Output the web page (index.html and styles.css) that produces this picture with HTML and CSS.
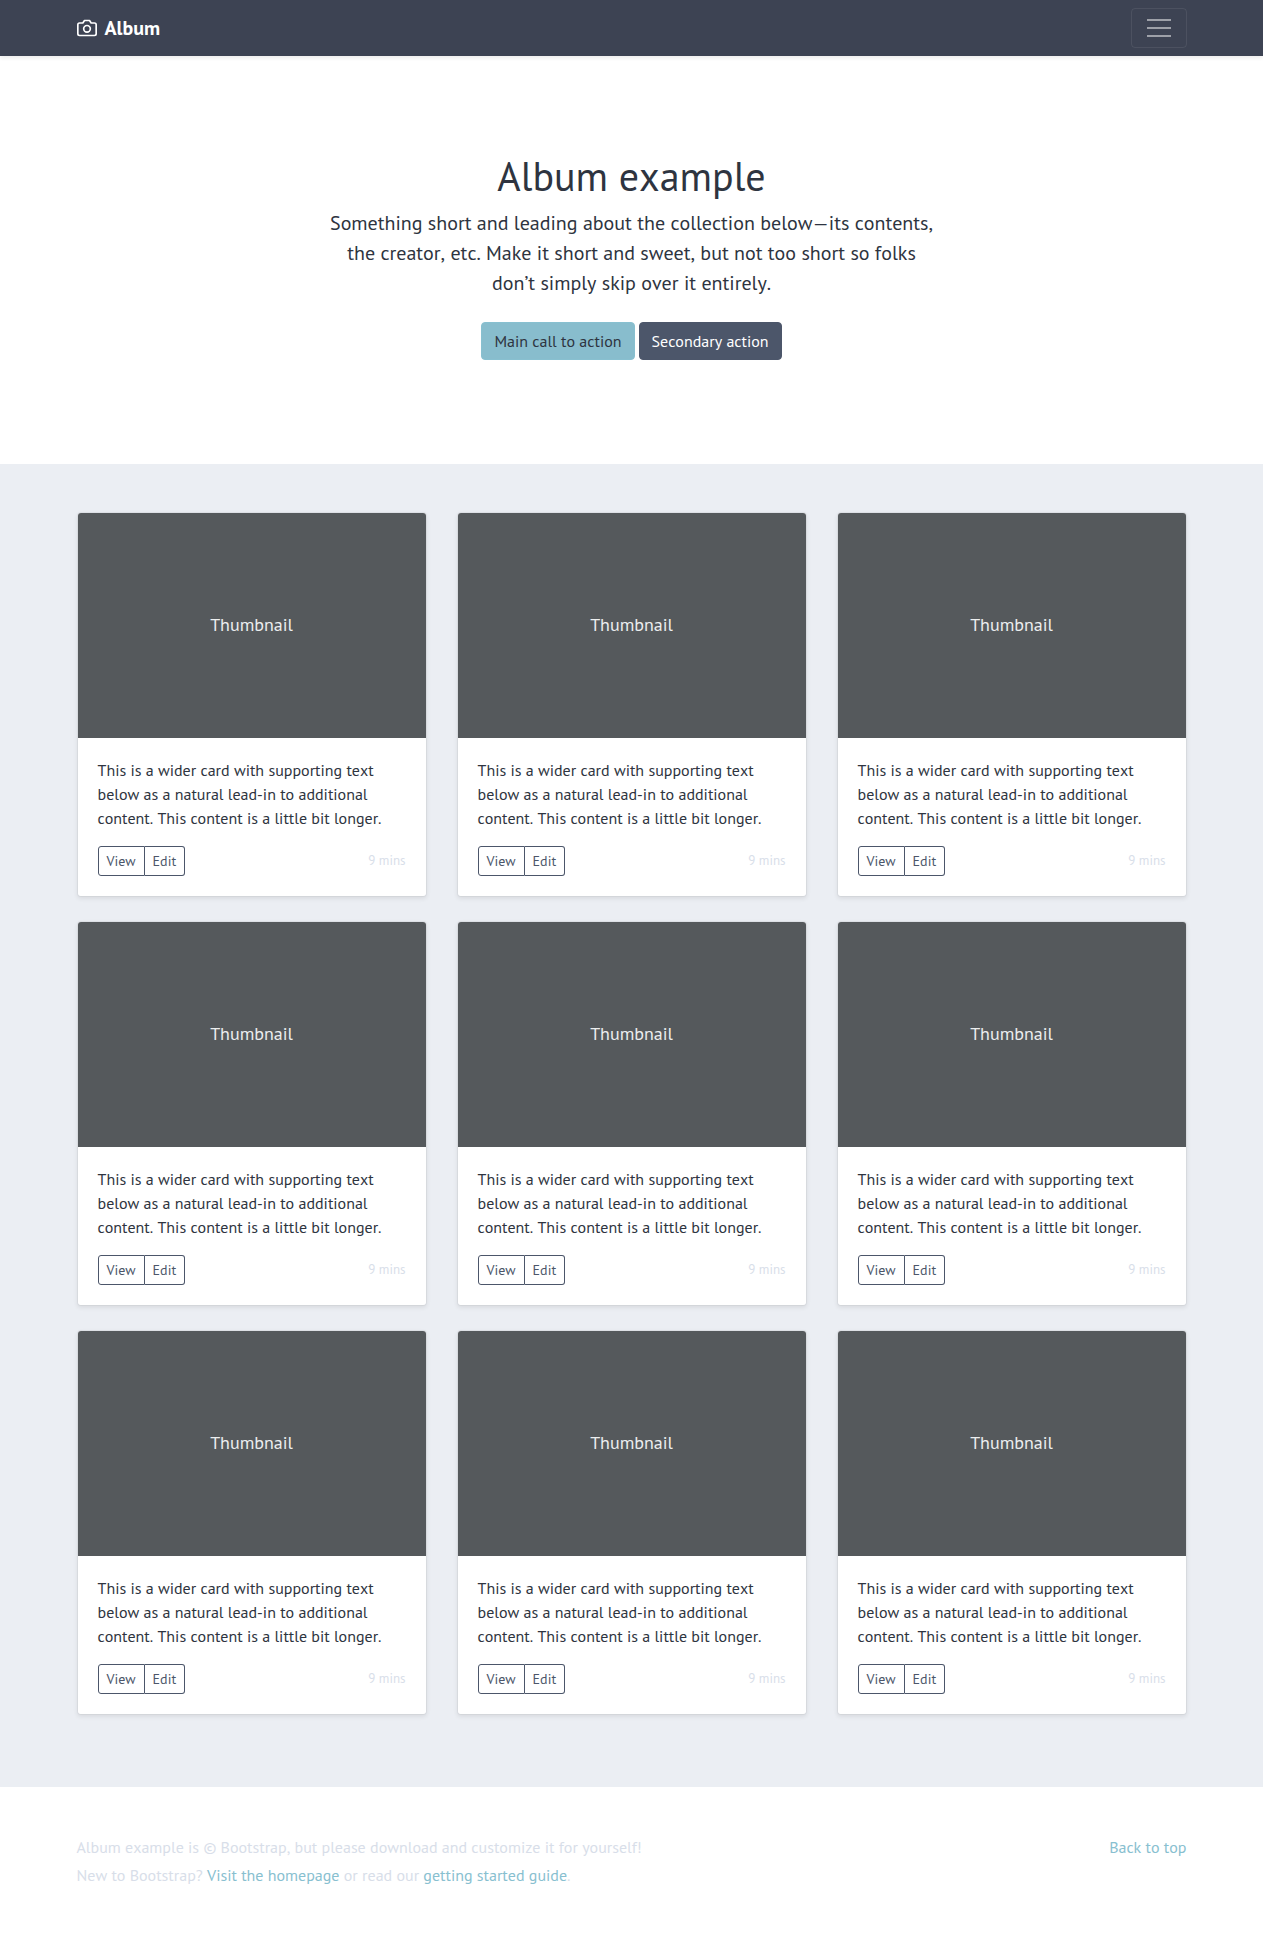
FILE: index.html
```
<!DOCTYPE html>
<html lang="en">
<head>
<meta charset="utf-8">
<meta name="viewport" content="width=device-width, initial-scale=1">
<title>Album example</title>
<link rel="stylesheet" href="styles.css">
</head>
<body id="top">
<header class="navbar">
  <div class="container navbar-inner">
    <a class="brand" href="#top">
      <svg class="brand-icon" viewBox="0 0 24 24" width="20" height="20" fill="none" stroke="currentColor" stroke-width="2" stroke-linecap="round" stroke-linejoin="round" aria-hidden="true"><path d="M23 19a2 2 0 0 1-2 2H3a2 2 0 0 1-2-2V8a2 2 0 0 1 2-2h4l2-3h6l2 3h4a2 2 0 0 1 2 2z"/><circle cx="12" cy="13" r="4"/></svg>
      <strong>Album</strong>
    </a>
    <button class="toggler" type="button" aria-label="Toggle navigation">
      <svg viewBox="0 0 30 30" width="30" height="30" aria-hidden="true"><path d="M4 7h22M4 15h22M4 23h22" stroke="currentColor" stroke-width="2" stroke-linecap="square"/></svg>
    </button>
  </div>
</header>
<main>
  <section class="hero">
    <div class="hero-inner">
      <h1>Album example</h1>
      <p class="lead">Something short and leading about the collection below—its contents, the creator, etc. Make it short and sweet, but not too short so folks don’t simply skip over it entirely.</p>
      <div class="hero-actions">
        <a class="btn btn-primary" href="#album">Main call to action</a>
        <a class="btn btn-secondary" href="#album">Secondary action</a>
      </div>
    </div>
  </section>
  <section class="album" id="album">
    <div class="container cards"></div>
  </section>
</main>
<footer class="footer">
  <div class="container footer-inner">
    <div>
      <p>Album example is © Bootstrap, but please download and customize it for yourself!</p>
      <p>New to Bootstrap? <a href="#home">Visit the homepage</a> or read our <a href="#guide">getting started guide</a>.</p>
    </div>
    <a href="#top">Back to top</a>
  </div>
</footer>
<script src="cards.js"></script>
</body>
</html>
```
FILE: cards.js
```
const cardMarkup = `
<article class="card">
  <div class="thumb">Thumbnail</div>
  <div class="card-body">
    <p class="card-text">This is a wider card with supporting text below as a natural lead-in to additional content. This content is a little bit longer.</p>
    <div class="card-footer">
      <div class="btn-group">
        <button class="btn-sm" type="button">View</button>
        <button class="btn-sm" type="button">Edit</button>
      </div>
      <small>9 mins</small>
    </div>
  </div>
</article>`;
document.querySelector(".cards").innerHTML = cardMarkup.repeat(9);
```
FILE: styles.css
```
* {
  box-sizing: border-box;
}

body {
  margin: 0;
  background: #fff;
  color: #2e3440;
  font-family: "PT Sans", Lato, sans-serif;
  font-size: 16px;
  font-kerning: none;
  line-height: 24px;
}

h1, p {
  margin: 0;
}

a {
  color: #88c0d0;
  text-decoration: none;
}

.container {
  width: 100%;
  max-width: 1140px;
  margin: 0 auto;
  padding: 0 15px;
}

/* Navigation */
.navbar {
  position: relative;
  padding: 8px 0;
  background: #3d4353;
  box-shadow: 0 2px 4px rgba(0, 0, 0, .075);
}

.navbar-inner {
  display: flex;
  align-items: center;
  justify-content: space-between;
}

.brand {
  display: flex;
  align-items: center;
  gap: 8px;
  color: #fff;
  font-size: 20px;
}

.toggler {
  display: flex;
  align-items: center;
  height: 40px;
  padding: 0 12px;
  border: 1px solid rgba(255, 255, 255, .08);
  border-radius: 4px;
  background: transparent;
  color: rgba(255, 255, 255, .5);
}

/* Hero */
.hero {
  padding: 96px 16px;
  text-align: center;
}

.hero-inner {
  max-width: 610px;
  margin: 0 auto;
}

h1 {
  margin-bottom: 8px;
  font-size: 40px;
  font-weight: 400;
  line-height: 48px;
}

.lead {
  margin-bottom: 24px;
  font-size: 20px;
  line-height: 30px;
}

.hero-actions {
  display: flex;
  flex-wrap: wrap;
  justify-content: center;
  gap: 4px;
  padding-bottom: 8px;
}

.btn {
  padding: 6px 12px;
  border: 1px solid transparent;
  border-radius: 4px;
}

.btn-primary {
  border-color: #88c0d0;
  background: #88bdcd;
  color: #2e3440;
}

.btn-secondary {
  border-color: #4c566a;
  background: #4c566a;
  color: #fff;
}

/* Album grid */
.album {
  padding: 48px 0 72px;
  background: #ebeef3;
}

.cards {
  display: grid;
  grid-template-columns: repeat(auto-fit, minmax(300px, 1fr));
  gap: 24px 30px;
}

.card {
  overflow: hidden;
  border: 1px solid rgba(0, 0, 0, .04);
  border-radius: 4px;
  background: #fff;
  background-clip: padding-box;
  box-shadow: 0 2px 4px rgba(0, 0, 0, .075);
}

.thumb {
  display: flex;
  align-items: center;
  justify-content: center;
  height: 225px;
  padding-bottom: 2px;
  background: #55595c;
  color: #eceeef;
  font-size: 18px;
}

.card-body {
  padding: 20px;
}

.card-text {
  margin-bottom: 16px;
}

.card-footer {
  display: flex;
  align-items: center;
  justify-content: space-between;
}

.btn-group {
  display: flex;
}

.btn-sm {
  padding: 4px 8px;
  border: 1px solid #4c566a;
  border-radius: 3px 0 0 3px;
  background: transparent;
  color: #4c566a;
  font-family: inherit;
  font-size: 14px;
  font-kerning: none;
  line-height: 20px;
}

.btn-sm + .btn-sm {
  border-left: 0;
  border-radius: 0 3px 3px 0;
}

small {
  color: #d8dee9;
  font-size: 13px;
}

/* Footer */
.footer {
  padding: 48px 0;
  color: #d8dee9;
}

.footer-inner {
  display: flex;
  justify-content: space-between;
  gap: 24px;
}

.footer p {
  margin-bottom: 4px;
}
```
